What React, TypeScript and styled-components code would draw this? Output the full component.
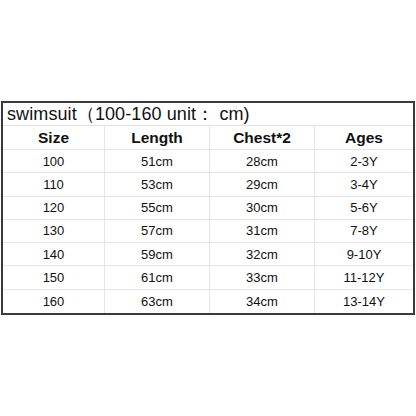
import styled, { createGlobalStyle } from 'styled-components'

const GlobalStyle = createGlobalStyle`
  html, body {
    margin: 0;
    padding: 0;
    background: #ffffff;
  }
  body {
    font-family: 'Liberation Sans', Arial, sans-serif;
    color: #111;
  }
`

const Page = styled.div`
  width: 416px;
  height: 416px;
  box-sizing: border-box;
  padding: 101px 1px 0 1px;
`

const Table = styled.div`
  width: 414px;
  height: 214px;
  box-sizing: border-box;
  border: 2px solid #3a3a3a;
  display: grid;
  grid-template-columns: 102px 105px 105px 1fr;
  grid-template-rows: 23px 24px repeat(7, 1fr);
`

const Title = styled.div`
  grid-column: 1 / -1;
  display: flex;
  align-items: center;
  padding-left: 4px;
  font-size: 18px;
  border-bottom: 1px solid #e2e2e2;
  letter-spacing: 0.1px;
`

const Cell = styled.div<{ $head?: boolean; $last?: boolean; $bottom?: boolean }>`
  display: flex;
  align-items: center;
  justify-content: center;
  font-size: ${(p) => (p.$head ? '15.5px' : '13px')};
  font-weight: ${(p) => (p.$head ? 700 : 400)};
  border-right: ${(p) => (p.$last ? 'none' : '1px solid #e4e4e4')};
  border-bottom: ${(p) => (p.$bottom ? 'none' : '1px solid #e4e4e4')};
`

const headers = ['Size', 'Length', 'Chest*2', 'Ages']

const rows = [
  ['100', '51cm', '28cm', '2-3Y'],
  ['110', '53cm', '29cm', '3-4Y'],
  ['120', '55cm', '30cm', '5-6Y'],
  ['130', '57cm', '31cm', '7-8Y'],
  ['140', '59cm', '32cm', '9-10Y'],
  ['150', '61cm', '33cm', '11-12Y'],
  ['160', '63cm', '34cm', '13-14Y'],
]

export default function App() {
  return (
    <>
      <GlobalStyle />
      <Page>
        <Table>
          <Title>swimsuit（100-160 unit： cm)</Title>
          {headers.map((h, i) => (
            <Cell key={h} $head $last={i === 3}>
              {h}
            </Cell>
          ))}
          {rows.map((row, r) =>
            row.map((v, i) => (
              <Cell key={`${r}-${i}`} $last={i === 3} $bottom={r === rows.length - 1}>
                {v}
              </Cell>
            )),
          )}
        </Table>
      </Page>
    </>
  )
}
